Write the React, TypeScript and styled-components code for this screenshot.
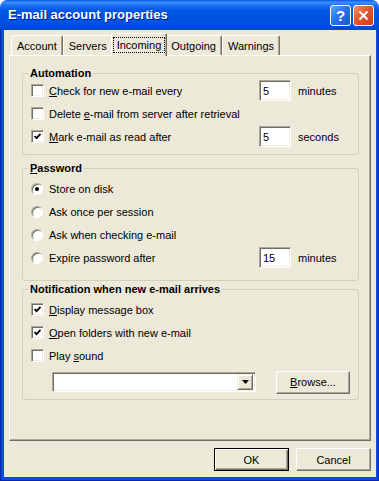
import React from "react";
import styled, { createGlobalStyle } from "styled-components";

const GlobalStyle = createGlobalStyle`
  html, body {
    margin: 0;
    padding: 0;
    background: #fff;
  }
  body {
    font-family: "Liberation Sans", Arial, sans-serif;
    font-size: 11px;
    color: #000;
  }
`;

const Window = styled.div`
  width: 379px;
  height: 481px;
  display: flex;
  flex-direction: column;
`;

const TitleBar = styled.div`
  height: 30px;
  flex: none;
  display: flex;
  align-items: center;
  gap: 2px;
  padding: 0 5px 0 8px;
  box-sizing: border-box;
  border-radius: 7px 7px 0 0;
  background: linear-gradient(
    to bottom,
    #0a5de8 0%,
    #3d8ff9 9%,
    #1a6ef5 18%,
    #0056e6 35%,
    #0052df 75%,
    #0046cf 100%
  );
`;

const TitleText = styled.div`
  flex: 1;
  color: #fff;
  font-weight: bold;
  font-size: 13px;
  text-shadow: 1px 1px #0a1883;
  padding-bottom: 1px;
`;

const TitleButton = styled.div<{ $close?: boolean }>`
  width: 21px;
  height: 21px;
  box-sizing: border-box;
  border: 1px solid #fff;
  border-radius: 3px;
  display: flex;
  align-items: center;
  justify-content: center;
  color: #fff;
  font-weight: bold;
  font-size: 15px;
  background: ${(p) =>
    p.$close
      ? "linear-gradient(135deg, #f0906c 0%, #e2582c 45%, #cc3d12 100%)"
      : "linear-gradient(135deg, #6fa0fb 0%, #2d6ff0 45%, #1c56d6 100%)"};
`;

const Frame = styled.div`
  flex: 1;
  display: flex;
  padding: 0 4px 4px;
  background: #0b4ade;
  box-shadow: inset 1px 0 #0726a8, inset -1px 0 #0726a8, inset 0 -1px #0726a8;
`;

const Body = styled.div`
  flex: 1;
  display: flex;
  flex-direction: column;
  background: #ece9d8;
  padding: 3px 5px 0;
`;

const TabStrip = styled.div`
  display: flex;
  align-items: flex-end;
  height: 22px;
  padding-left: 2px;
`;

const Tab = styled.div<{ $active?: boolean }>`
  position: relative;
  z-index: ${(p) => (p.$active ? 1 : 0)};
  box-sizing: border-box;
  height: ${(p) => (p.$active ? 23 : 20)}px;
  margin: 0 ${(p) => (p.$active ? -2 : 0)}px ${(p) => (p.$active ? -1 : 0)}px;
  padding: ${(p) => (p.$active ? "0 1px" : "1px 5px 0")};
  display: flex;
  align-items: center;
  background: #ece9d8;
  border-top: 1px solid #fff;
  border-left: 1px solid #fff;
  border-right: 1px solid #716f64;
  box-shadow: inset -1px 0 #aca899;
  border-radius: 2px 2px 0 0;
`;

const FocusLabel = styled.span`
  border: 1px dotted #000;
  padding: 1px 3px;
  line-height: 12px;
`;

const Panel = styled.div`
  flex: 1;
  display: flex;
  flex-direction: column;
  border-top: 1px solid #fff;
  border-left: 1px solid #fff;
  border-right: 1px solid #716f64;
  border-bottom: 1px solid #716f64;
  box-shadow: inset -1px -1px #aca899;
  padding: 11px 11px 0 12px;
`;

const Group = styled.fieldset<{ $top: number; $padTop: number; $padBottom: number }>`
  margin: ${(p) => p.$top}px 0 0;
  padding: ${(p) => p.$padTop}px 8px ${(p) => p.$padBottom}px;
  border: 1px solid #d0d0bf;
  border-radius: 3px;
  min-width: 0;
`;

const GroupTitle = styled.legend`
  font-weight: bold;
  font-size: 11px;
  line-height: 12px;
  padding: 0 2px;
  margin-left: -3px;
`;

const Row = styled.div`
  height: 23px;
  display: grid;
  grid-template-columns: 221px 32px auto;
  column-gap: 7px;
  align-items: center;
`;

const Option = styled.label<{ $gap: number }>`
  display: flex;
  align-items: center;
  gap: ${(p) => p.$gap}px;
  white-space: nowrap;
`;

const CheckBox = styled.span`
  width: 13px;
  height: 13px;
  box-sizing: border-box;
  background: #fff;
  border: 1px solid;
  border-color: #aca899 #fff #fff #aca899;
  box-shadow: inset 1px 1px #716f64, inset -1px -1px #f1efe2;
  display: flex;
  align-items: center;
  justify-content: center;
`;

const RadioBox = styled.span`
  width: 12px;
  height: 12px;
  box-sizing: border-box;
  border-radius: 50%;
  background: #fff;
  border: 1px solid;
  border-color: #aca899 #fff #fff #aca899;
  box-shadow: inset 1px 1px #716f64;
  display: flex;
  align-items: center;
  justify-content: center;
`;

const RadioDot = styled.span`
  width: 4px;
  height: 4px;
  border-radius: 50%;
  background: #000;
`;

const NumberBox = styled.div`
  width: 32px;
  height: 21px;
  box-sizing: border-box;
  background: #fff;
  border: 1px solid;
  border-color: #aca899 #fff #fff #aca899;
  box-shadow: inset 1px 1px #716f64, inset -1px -1px #f1efe2;
  padding: 0 3px;
  display: flex;
  align-items: center;
`;

const ComboRow = styled.div`
  display: flex;
  align-items: center;
  gap: 20px;
  height: 24px;
  margin-top: 3px;
  padding-left: 21px;
`;

const Combo = styled.div`
  width: 204px;
  height: 20px;
  box-sizing: border-box;
  background: #fff;
  border: 1px solid;
  border-color: #aca899 #fff #fff #aca899;
  box-shadow: inset 1px 1px #716f64, inset -1px -1px #f1efe2;
  display: flex;
  justify-content: flex-end;
  align-items: center;
  padding: 0 2px;
`;

const DropButton = styled.div`
  width: 16px;
  height: 16px;
  box-sizing: border-box;
  background: #ece9d8;
  border: 1px solid;
  border-color: #f1efe2 #716f64 #716f64 #f1efe2;
  box-shadow: inset 1px 1px #fff, inset -1px -1px #aca899;
  display: flex;
  align-items: center;
  justify-content: center;
`;

const PushButton = styled.div<{ $isDefault?: boolean; $width: number }>`
  width: ${(p) => p.$width}px;
  height: 23px;
  box-sizing: border-box;
  background: #ece9d8;
  display: flex;
  align-items: center;
  justify-content: center;
  border: 1px solid;
  border-color: ${(p) => (p.$isDefault ? "#000" : "#fff #716f64 #716f64 #fff")};
  box-shadow: ${(p) =>
    p.$isDefault
      ? "inset 1px 1px #fff, inset -1px -1px #716f64, inset -2px -2px #aca899"
      : "inset -1px -1px #aca899"};
`;

const Footer = styled.div`
  display: flex;
  justify-content: flex-end;
  gap: 7px;
  padding: 7px 0 6px;
`;

const Check = ({ on }: { on?: boolean }) => (
  <CheckBox>
    {on && (
      <svg width="9" height="9" viewBox="0 0 9 9">
        <path d="M1.5 4 L3.5 6.2 L7.5 1.8" fill="none" stroke="#000" strokeWidth="1.8" />
      </svg>
    )}
  </CheckBox>
);

const Radio = ({ on }: { on?: boolean }) => <RadioBox>{on && <RadioDot />}</RadioBox>;

export default function App() {
  return (
    <>
      <GlobalStyle />
      <Window>
        <TitleBar>
          <TitleText>E-mail account properties</TitleText>
          <TitleButton>?</TitleButton>
          <TitleButton $close>
            <svg width="11" height="11" viewBox="0 0 11 11">
              <path d="M1.5 1.5 L9.5 9.5 M9.5 1.5 L1.5 9.5" stroke="#fff" strokeWidth="2" />
            </svg>
          </TitleButton>
        </TitleBar>

        <Frame>
          <Body>
            <TabStrip>
              <Tab>Account</Tab>
              <Tab>Servers</Tab>
              <Tab $active>
                <FocusLabel>Incoming</FocusLabel>
              </Tab>
              <Tab>Outgoing</Tab>
              <Tab>Warnings</Tab>
            </TabStrip>

            <Panel>
              <Group $top={0} $padTop={0} $padBottom={6}>
                <GroupTitle>Automation</GroupTitle>
                <Row>
                  <Option $gap={5}>
                    <Check />
                    <span><u>C</u>heck for new e-mail every</span>
                  </Option>
                  <NumberBox>5</NumberBox>
                  <span>minutes</span>
                </Row>
                <Row>
                  <Option $gap={5}>
                    <Check />
                    <span>Delete <u>e</u>-mail from server after retrieval</span>
                  </Option>
                </Row>
                <Row>
                  <Option $gap={5}>
                    <Check on />
                    <span><u>M</u>ark e-mail as read after</span>
                  </Option>
                  <NumberBox>5</NumberBox>
                  <span>seconds</span>
                </Row>
              </Group>

              <Group $top={7} $padTop={3} $padBottom={11}>
                <GroupTitle><u>P</u>assword</GroupTitle>
                <Row>
                  <Option $gap={6}>
                    <Radio on />
                    <span>Store on disk</span>
                  </Option>
                </Row>
                <Row>
                  <Option $gap={6}>
                    <Radio />
                    <span>Ask once per session</span>
                  </Option>
                </Row>
                <Row>
                  <Option $gap={6}>
                    <Radio />
                    <span>Ask when checking e-mail</span>
                  </Option>
                </Row>
                <Row>
                  <Option $gap={6}>
                    <Radio />
                    <span>Expire password after</span>
                  </Option>
                  <NumberBox>15</NumberBox>
                  <span>minutes</span>
                </Row>
              </Group>

              <Group $top={2} $padTop={3} $padBottom={5}>
                <GroupTitle>Notification when new e-mail arrives</GroupTitle>
                <Row>
                  <Option $gap={5}>
                    <Check on />
                    <span><u>D</u>isplay message box</span>
                  </Option>
                </Row>
                <Row>
                  <Option $gap={5}>
                    <Check on />
                    <span><u>O</u>pen folders with new e-mail</span>
                  </Option>
                </Row>
                <Row>
                  <Option $gap={5}>
                    <Check />
                    <span>Play <u>s</u>ound</span>
                  </Option>
                </Row>
                <ComboRow>
                  <Combo>
                    <DropButton>
                      <svg width="7" height="4" viewBox="0 0 7 4">
                        <path d="M0 0 H7 L3.5 4 Z" fill="#000" />
                      </svg>
                    </DropButton>
                  </Combo>
                  <PushButton $width={74}>
                    <span><u>B</u>rowse...</span>
                  </PushButton>
                </ComboRow>
              </Group>
            </Panel>

            <Footer>
              <PushButton $isDefault $width={75}>OK</PushButton>
              <PushButton $width={75}>Cancel</PushButton>
            </Footer>
          </Body>
        </Frame>
      </Window>
    </>
  );
}
